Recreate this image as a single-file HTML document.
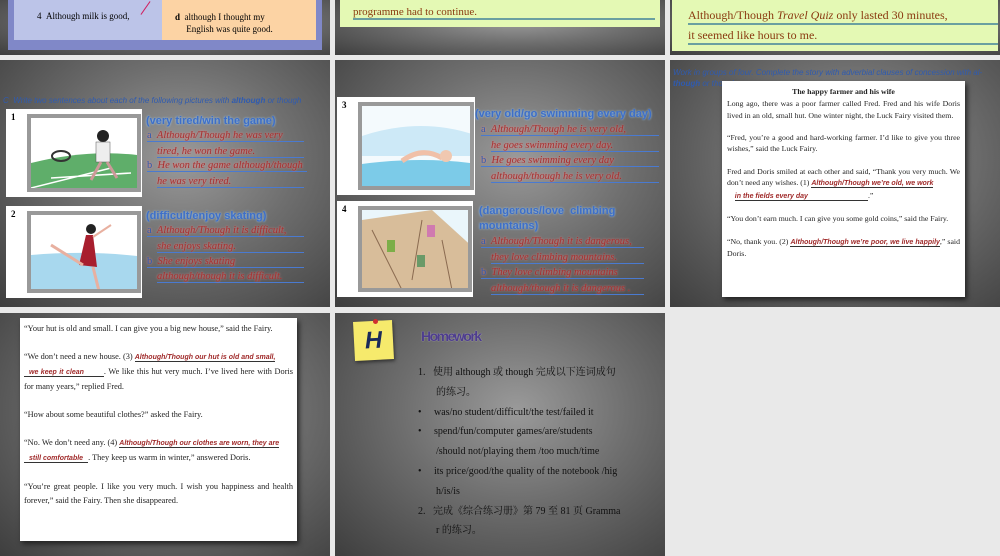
<!DOCTYPE html>
<html><head><meta charset="utf-8"><style>
*{margin:0;padding:0;box-sizing:border-box}
body{width:1000px;height:556px;background:#e9e9e9;position:relative;overflow:hidden;font-family:"Liberation Serif","Noto Serif CJK SC",serif}
.s{position:absolute;background:radial-gradient(ellipse at 55% 40%,#9a9a9a 0%,#6e6e6e 45%,#3e3e3e 100%);overflow:hidden}
.a{position:absolute}
.blue{color:#3e6fc8;font-family:"Liberation Sans",sans-serif;font-weight:bold;font-size:11px;text-shadow:0 0 2px #9cf}
.red{color:#a83030;font-style:italic;font-size:10.5px;border-bottom:1px solid #4a7ad0;white-space:nowrap;text-shadow:0 0 2px #e88}
.pic{position:absolute;background:#fff;padding:5px}
.pic .in{border:4px solid #999;width:100%;height:100%;overflow:hidden;position:relative;background:#fff}
.num{position:absolute;font-size:9px;font-weight:bold;left:5px;top:3px}
.doc{position:absolute;background:#fff;color:#222;font-size:7.8px;line-height:11.3px;box-shadow:2px 3px 5px #222}
.ans{color:#a02a2a;font-style:italic;font-weight:bold;font-family:"Liberation Sans",sans-serif;font-size:7px}
</style></head><body>

<!-- row1 -->
<div class="s" style="left:0;top:0;width:330px;height:55px">
 <div class="a" style="left:8px;top:0;width:314px;height:50px;background:#8088c8"></div>
 <div class="a" style="left:14px;top:0;width:148px;height:40px;background:#bcc4e8"></div>
 <div class="a" style="left:162px;top:0;width:154px;height:40px;background:#fcd3a4"></div>
 <div class="a" style="left:37px;top:11px;font-size:9px">4&nbsp;&nbsp;Although milk is good,</div>
 <div class="a" style="left:175px;top:11px;font-size:9px;line-height:12px"><b>d</b>&nbsp;&nbsp;although I thought my<br>&nbsp;&nbsp;&nbsp;&nbsp;&nbsp;English was quite good.</div>
 <div class="a" style="left:145px;top:0;width:1px;height:16px;background:#d02060;transform:rotate(35deg)"></div>
</div>
<div class="s" style="left:335px;top:0;width:330px;height:55px">
 <div class="a" style="left:5px;top:0;width:320px;height:27px;background:#e4f9b4"></div>
 <div class="a" style="left:18px;top:6px;width:302px;font-size:11px;color:#8a3a10;border-bottom:2px solid #6aa0a0">programme had to continue.</div>
</div>
<div class="s" style="left:670px;top:0;width:330px;height:55px">
 <div class="a" style="left:2px;top:0;width:326px;height:51px;background:#e4f9b4"></div>
 <div class="a" style="left:18px;top:8px;width:310px;font-size:12px;color:#8a3a10;border-bottom:2px solid #6aa0a0">Although/Though <i>Travel Quiz</i> only lasted 30 minutes,</div>
 <div class="a" style="left:18px;top:28px;width:310px;font-size:12px;color:#8a3a10;border-bottom:2px solid #6aa0a0">it seemed like hours to me.</div>
</div>

<!-- row2 col1 -->
<div class="s" style="left:0;top:60px;width:330px;height:247px">
 <div class="a" style="left:3px;top:36px;font-family:'Liberation Sans',sans-serif;font-style:italic;font-size:8px;color:#2f5bb0;white-space:nowrap">C&nbsp; Write two sentences about each of the following pictures with <b>although</b> or though</div>
 <div class="pic" style="left:6px;top:49px;width:136px;height:88px"><div class="num">1</div><div class="in" style="margin-left:16px;width:114px">
  <svg width="114" height="78"><path d="M0 45 Q60 30 114 38 V78 H0Z" fill="#5fae6a"/><path d="M0 70 L80 50 M20 60 L100 55" stroke="#fff" stroke-width="1.5"/><circle cx="72" cy="18" r="6" fill="#222"/><rect x="65" y="24" width="14" height="20" fill="#eee" stroke="#555" stroke-width=".5"/><path d="M70 44 L60 62 M76 44 L86 60" stroke="#c99" stroke-width="3"/><ellipse cx="30" cy="38" rx="9" ry="5" fill="none" stroke="#333" stroke-width="2"/></svg></div></div>
 <div class="pic" style="left:6px;top:146px;width:136px;height:92px"><div class="num">2</div><div class="in" style="margin-left:16px;width:114px">
  <svg width="114" height="82"><path d="M0 40 Q60 35 114 42 V82 H0Z" fill="#a8d8ee"/><circle cx="60" cy="14" r="5" fill="#222"/><path d="M55 20 L48 50 L66 52 L62 20Z" fill="#a81e2e"/><path d="M52 50 L20 30 M62 52 L68 76" stroke="#e8b0a0" stroke-width="3"/><path d="M62 22 L80 10" stroke="#e8b0a0" stroke-width="2"/></svg></div></div>
 <div class="a blue" style="left:146px;top:55px">(very tired/win the game)</div>
 <div class="a red" style="left:147px;top:70px;width:157px"><span style="color:#2f5bb0;font-style:normal">a</span>&nbsp;&nbsp;Although/Though he was very</div>
 <div class="a red" style="left:157px;top:86px;width:147px">tired, he won the game.</div>
 <div class="a red" style="left:147px;top:100px;width:160px"><span style="color:#2f5bb0;font-style:normal">b</span>&nbsp;&nbsp;He won the game although/though</div>
 <div class="a red" style="left:157px;top:116px;width:147px">he was very tired.</div>
 <div class="a blue" style="left:146px;top:150px">(difficult/enjoy skating)</div>
 <div class="a red" style="left:147px;top:165px;width:157px"><span style="color:#2f5bb0;font-style:normal">a</span>&nbsp;&nbsp;Although/Though it is difficult,</div>
 <div class="a red" style="left:157px;top:181px;width:147px">she enjoys skating.</div>
 <div class="a red" style="left:147px;top:196px;width:157px"><span style="color:#2f5bb0;font-style:normal">b</span>&nbsp;&nbsp;She enjoys skating</div>
 <div class="a red" style="left:157px;top:211px;width:147px">although/though it is difficult.</div>
</div>

<!-- row2 col2 -->
<div class="s" style="left:335px;top:60px;width:330px;height:247px">
 <div class="pic" style="left:2px;top:37px;width:138px;height:98px"><div class="num">3</div><div class="in" style="margin-left:16px;width:116px">
  <svg width="116" height="88"><rect y="0" width="116" height="88" fill="#f4fafd"/><path d="M0 30 Q60 10 116 30 V50 H0Z" fill="#cde9f7"/><path d="M0 58 Q60 50 116 58 V88 H0Z" fill="#7ccbe8"/><path d="M40 55 Q60 40 80 52" stroke="#f0c0a8" stroke-width="5" fill="none"/><circle cx="84" cy="50" r="6" fill="#f0c8b0"/></svg></div></div>
 <div class="pic" style="left:2px;top:141px;width:136px;height:96px"><div class="num">4</div><div class="in" style="margin-left:16px;width:114px">
  <svg width="114" height="86"><rect width="114" height="86" fill="#eaf6fb"/><path d="M0 10 L70 0 L114 40 V86 H0Z" fill="#d8bd9a"/><path d="M10 20 L40 80 M60 10 L50 70 M80 30 L90 80" stroke="#8a6a50" stroke-width="1"/><rect x="25" y="30" width="8" height="12" fill="#7cae48"/><rect x="65" y="15" width="8" height="12" fill="#d07ab0"/><rect x="55" y="45" width="8" height="12" fill="#6a9a68"/></svg></div></div>
 <div class="a blue" style="left:140px;top:48px">(very old/go swimming every day)</div>
 <div class="a red" style="left:146px;top:64px;width:178px"><span style="color:#2f5bb0;font-style:normal">a</span>&nbsp;&nbsp;Although/Though he is very old,</div>
 <div class="a red" style="left:156px;top:80px;width:168px">he goes swimming every day.</div>
 <div class="a red" style="left:146px;top:95px;width:178px"><span style="color:#2f5bb0;font-style:normal">b</span>&nbsp;&nbsp;He goes swimming every day</div>
 <div class="a red" style="left:156px;top:111px;width:168px">although/though he is very old.</div>
 <div class="a blue" style="left:144px;top:144px;line-height:15px">(dangerous/love&nbsp; climbing<br>mountains)</div>
 <div class="a red" style="left:146px;top:176px;width:163px"><span style="color:#2f5bb0;font-style:normal">a</span>&nbsp;&nbsp;Although/Though it is dangerous,</div>
 <div class="a red" style="left:156px;top:192px;width:153px">they love climbing mountains.</div>
 <div class="a red" style="left:146px;top:207px;width:163px"><span style="color:#2f5bb0;font-style:normal">b</span>&nbsp;&nbsp;They love climbing mountains</div>
 <div class="a red" style="left:156px;top:223px;width:153px">although/though it is dangerous .</div>
</div>

<!-- row2 col3 -->
<div class="s" style="left:670px;top:60px;width:330px;height:247px">
 <div class="a" style="left:3px;top:7px;font-family:'Liberation Sans',sans-serif;font-style:italic;font-size:8px;color:#2f5bb0;line-height:11px;width:340px;white-space:nowrap">Work in groups of four. Complete the story with adverbial clauses of concession with al-<br><b>though</b> or though.</div>
 <div class="doc" style="left:52px;top:21px;width:243px;height:216px;padding:5px 5px;text-align:justify">
  <div style="text-align:center;font-weight:bold;margin-bottom:1px">The happy farmer and his wife</div>
  Long ago, there was a poor farmer called Fred. Fred and his wife Doris lived in an old, small hut. One winter night, the Luck Fairy visited them.<br><br>
  “Fred, you’re a good and hard-working farmer. I’d like to give you three wishes,” said the Luck Fairy.<br><br>
  Fred and Doris smiled at each other and said, “Thank you very much. We don’t need any wishes. (1) <span class="ans" style="border-bottom:1px solid #333">Although/Though we’re old, we work</span><br>&nbsp;&nbsp;&nbsp;&nbsp;<span class="ans" style="border-bottom:1px solid #333;padding-right:60px">in the fields every day</span>.”<br><br>
  “You don’t earn much. I can give you some gold coins,” said the Fairy.<br><br>
  “No, thank you. (2) <span class="ans" style="border-bottom:1px solid #333">Although/Though we’re poor, we live happily</span>,” said Doris.
 </div>
</div>

<!-- row3 col1 -->
<div class="s" style="left:0;top:313px;width:330px;height:243px">
 <div class="doc" style="left:20px;top:5px;width:277px;height:223px;padding:4px 4px;font-size:8.3px;line-height:14px;text-align:justify">
  “Your hut is old and small. I can give you a big new house,” said the Fairy.<br><br>
  “We don’t need a new house. (3) <span class="ans" style="border-bottom:1px solid #333">Although/Though our hut is old and small,</span><br><span class="ans" style="border-bottom:1px solid #333;padding:0 20px 0 5px">we keep it clean</span>. We like this hut very much. I’ve lived here with Doris for many years,” replied Fred.<br><br>
  “How about some beautiful clothes?” asked the Fairy.<br><br>
  “No. We don’t need any. (4) <span class="ans" style="border-bottom:1px solid #333">Although/Though our clothes are worn, they are</span><br><span class="ans" style="border-bottom:1px solid #333;padding:0 5px">still comfortable</span>. They keep us warm in winter,” answered Doris.<br><br>
  “You’re great people. I like you very much. I wish you happiness and health forever,” said the Fairy. Then she disappeared.
 </div>
</div>

<!-- row3 col2 -->
<div class="s" style="left:335px;top:313px;width:330px;height:243px">
 <div class="a" style="left:19px;top:8px;width:39px;height:39px;background:#f6ea6c;transform:rotate(-3deg);box-shadow:1px 2px 3px #333;font-family:'Liberation Sans',sans-serif;font-weight:bold;font-style:italic;font-size:24px;color:#1a2a5a;text-align:center;line-height:39px">H</div>
 <div class="a" style="left:38px;top:6px;width:5px;height:5px;border-radius:50%;background:#d03030"></div>
 <div class="a" style="left:86px;top:15px;font-family:'Liberation Sans',sans-serif;font-weight:bold;font-size:14px;color:#4e3d8e;letter-spacing:-1.5px;text-shadow:0 0 1px #ccc">Homework</div>
 <div class="a" style="left:83px;top:50px;width:230px;font-size:10px;line-height:19.8px;color:#111">
  <div>1.&nbsp;&nbsp;&nbsp;使用 although 或 though 完成以下连词成句</div>
  <div style="padding-left:18px">的练习。</div>
  <div>•&nbsp;&nbsp;&nbsp;&nbsp;&nbsp;was/no student/difficult/the test/failed it</div>
  <div>•&nbsp;&nbsp;&nbsp;&nbsp;&nbsp;spend/fun/computer games/are/students</div>
  <div style="padding-left:18px">/should not/playing them /too much/time</div>
  <div>•&nbsp;&nbsp;&nbsp;&nbsp;&nbsp;its price/good/the quality of the notebook /hig</div>
  <div style="padding-left:18px">h/is/is</div>
  <div>2.&nbsp;&nbsp;&nbsp;完成《综合练习册》第 79 至 81 页 Gramma</div>
  <div style="padding-left:18px">r 的练习。</div>
 </div>
</div>
</body></html>
